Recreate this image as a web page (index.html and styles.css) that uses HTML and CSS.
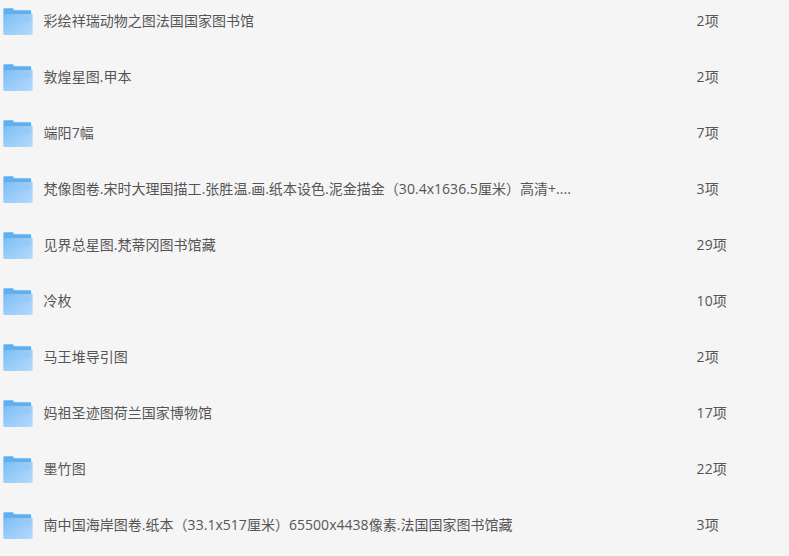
FILE: index.html
```html
<!DOCTYPE html>
<html lang="zh-CN">
<head>
    <meta charset="UTF-8">
    <meta name="viewport" content="width=device-width, initial-scale=1.0">
    <title>文件列表</title>
    <link rel="stylesheet" href="styles.css">
</head>
<body>

    <!-- Folder icon shared by all rows -->
    <svg class="icon-defs" width="0" height="0" aria-hidden="true">
        <defs>
            <linearGradient id="folder-front" x1="0" y1="0" x2="1" y2="1">
                <stop offset="0" stop-color="#7dbff5"/>
                <stop offset="1" stop-color="#b4dafc"/>
            </linearGradient>
            <linearGradient id="folder-back" x1="0" y1="0" x2="0" y2="1">
                <stop offset="0.2" stop-color="#60afef"/>
                <stop offset="1" stop-color="#9accf8"/>
            </linearGradient>
        </defs>
        <symbol id="folder" viewBox="0 0 30 28">
            <path d="M1.300 1.200H9.500C10.500 1.200 10.600 3.200 11.700 3.200H27.300Q28.200 3.200 28.200 4.200V27.700H1.300Q.4 27.700 .4 26.700V2.200Q.4 1.200 1.300 1.200z" fill="url(#folder-back)"/>
            <path d="M1.800 7H28.800Q29.600 7 29.600 7.800V26.700Q29.600 27.700 28.600 27.700H2Q1.200 27.700 1.200 26.700V7.600Q1.200 7 1.800 7z" fill="url(#folder-front)"/>
            <path d="M22.500 11.500h3v1.500h-3z" fill="#8ac4f3"/>
        </symbol>
    </svg>

    <ul class="file-list">
        <li class="file-row">
            <svg class="folder-icon"><use href="#folder"/></svg>
            <span class="file-name">彩绘祥瑞动物之图法国国家图书馆</span>
            <span class="file-count">2项</span>
        </li>
        <li class="file-row">
            <svg class="folder-icon"><use href="#folder"/></svg>
            <span class="file-name">敦煌星图.甲本</span>
            <span class="file-count">2项</span>
        </li>
        <li class="file-row">
            <svg class="folder-icon"><use href="#folder"/></svg>
            <span class="file-name">端阳7幅</span>
            <span class="file-count">7项</span>
        </li>
        <li class="file-row">
            <svg class="folder-icon"><use href="#folder"/></svg>
            <span class="file-name">梵像图卷.宋时大理国描工.张胜温.画.纸本设色.泥金描金（30.4x1636.5厘米）高清+....</span>
            <span class="file-count">3项</span>
        </li>
        <li class="file-row">
            <svg class="folder-icon"><use href="#folder"/></svg>
            <span class="file-name">见界总星图.梵蒂冈图书馆藏</span>
            <span class="file-count">29项</span>
        </li>
        <li class="file-row">
            <svg class="folder-icon"><use href="#folder"/></svg>
            <span class="file-name">冷枚</span>
            <span class="file-count">10项</span>
        </li>
        <li class="file-row">
            <svg class="folder-icon"><use href="#folder"/></svg>
            <span class="file-name">马王堆导引图</span>
            <span class="file-count">2项</span>
        </li>
        <li class="file-row">
            <svg class="folder-icon"><use href="#folder"/></svg>
            <span class="file-name">妈祖圣迹图荷兰国家博物馆</span>
            <span class="file-count">17项</span>
        </li>
        <li class="file-row">
            <svg class="folder-icon"><use href="#folder"/></svg>
            <span class="file-name">墨竹图</span>
            <span class="file-count">22项</span>
        </li>
        <li class="file-row">
            <svg class="folder-icon"><use href="#folder"/></svg>
            <span class="file-name">南中国海岸图卷.纸本（33.1x517厘米）65500x4438像素.法国国家图书馆藏</span>
            <span class="file-count">3项</span>
        </li>
    </ul>

</body>
</html>
```
FILE: styles.css
```css
body {
    font-family: 'Open Sans', 'Noto Sans CJK SC', sans-serif;
    font-size: 14px;
    line-height: 20px;
    letter-spacing: 0.03px;
    background-color: #f5f5f5;
    color: #555;
    margin: 0;
    height: 100vh;
    overflow: hidden;
}

.icon-defs {
    display: block;
}

.file-list {
    list-style: none;
    margin: -7px 0 0;
    padding: 0;
}

.file-row {
    display: grid;
    grid-template-columns: 30px 653px 1fr;
    align-items: center;
    height: 56px;
    padding-left: 3px;
}

.folder-icon {
    width: 30px;
    height: 28px;
}

.file-name {
    padding-left: 10.6px;
    white-space: nowrap;
}

.file-count {
    padding-left: 10.6px;
}
```
